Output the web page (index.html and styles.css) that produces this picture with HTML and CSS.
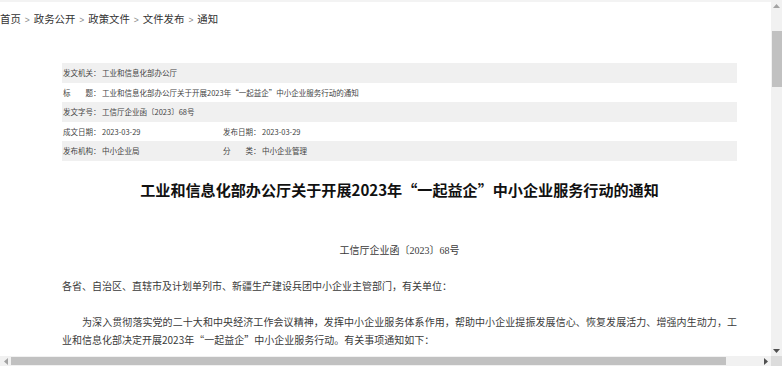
FILE: index.html
```html
<!DOCTYPE html>
<html lang="zh-CN">
<head>
  <meta charset="UTF-8">
  <title>工业和信息化部办公厅关于开展2023年“一起益企”中小企业服务行动的通知</title>
  <link rel="stylesheet" href="styles.css">
</head>
<body>

  <div class="window">
    <div class="viewport">

      <div class="crumbs">
        <a>首页</a><span class="sep">&gt;</span><a>政务公开</a><span class="sep">&gt;</span><a>政策文件</a><span class="sep">&gt;</span><a>文件发布</a><span class="sep">&gt;</span><a>通知</a>
      </div>

      <div class="article">
        <div class="meta">
          <div class="row odd">
            <div class="field"><span class="label">发文机关：</span><span>工业和信息化部办公厅</span></div>
          </div>
          <div class="row">
            <div class="field"><span class="label">标<span class="gap"></span>题：</span><span>工业和信息化部办公厅关于开展2023年“一起益企”中小企业服务行动的通知</span></div>
          </div>
          <div class="row odd">
            <div class="field"><span class="label">发文字号：</span><span>工信厅企业函〔2023〕68号</span></div>
          </div>
          <div class="row">
            <div class="field half"><span class="label">成文日期：</span><span>2023-03-29</span></div>
            <div class="field"><span class="label">发布日期：</span><span>2023-03-29</span></div>
          </div>
          <div class="row odd">
            <div class="field half"><span class="label">发布机构：</span><span>中小企业局</span></div>
            <div class="field"><span class="label">分<span class="gap"></span>类：</span><span>中小企业管理</span></div>
          </div>
        </div>

        <h1 class="title">工业和信息化部办公厅关于开展2023年“一起益企”中小企业服务行动的通知</h1>

        <p class="docno">工信厅企业函<span class="cjk">〔</span>2023<span class="cjk">〕</span>68号</p>

        <p class="text">各省、自治区、直辖市及计划单列市、新疆生产建设兵团中小企业主管部门，有关单位：</p>

        <p class="text indent">为深入贯彻落实党的二十大和中央经济工作会议精神，发挥中小企业服务体系作用，帮助中小企业提振发展信心、恢复发展活力、增强内生动力，工业和信息化部决定开展2023年“一起益企”中小企业服务行动。有关事项通知如下：</p>
      </div>

    </div>

    <div class="vbar">
      <div class="btn"><svg width="7" height="4" viewBox="0 0 7 4"><path d="M3.5 0L7 4H0z" fill="#a3a3a3"/></svg></div>
      <div class="vtrack"><div class="vthumb"></div></div>
      <div class="btn"><svg width="7" height="4" viewBox="0 0 7 4"><path d="M0 0H7L3.5 4z" fill="#505050"/></svg></div>
    </div>

    <div class="hbar">
      <div class="btn"><svg width="4" height="7" viewBox="0 0 4 7"><path d="M4 0V7L0 3.5z" fill="#a3a3a3"/></svg></div>
      <div class="htrack"><div class="hthumb"></div></div>
      <div class="btn"><svg width="4" height="7" viewBox="0 0 4 7"><path d="M0 0L4 3.5L0 7z" fill="#505050"/></svg></div>
    </div>

    <div class="corner"></div>
  </div>

</body>
</html>
```

FILE: styles.css
```css
html, body {
  margin: 0;
  height: 100%;
  background: #fff;
}

body {
  font-family: "Noto Sans CJK SC", sans-serif;
  color: #333;
}

.window {
  display: grid;
  grid-template-columns: 1fr 11px;
  grid-template-rows: 1fr 10px;
  height: 100vh;
}

.viewport {
  overflow: hidden;
  border-top: 2px solid #f3f3f3;
}

/* breadcrumb */
.crumbs {
  font-size: 10.4px;
  line-height: 20px;
  padding-top: 7px;
  color: #333;
  white-space: nowrap;
}

.crumbs .sep {
  color: #8a8a8a;
  font-family: "Liberation Sans", sans-serif;
  font-size: 8.5px;
  margin: 0 4px;
}

.article {
  width: 675px;
  margin-left: 62px;
}

/* info table */
.meta {
  margin-top: 33px;
  font-size: 7.5px;
  color: #444;
}

.row {
  display: flex;
  height: 19.5px;
  align-items: center;
  padding-left: 1px;
}

.row.odd {
  background: #f0f0f0;
}

.field {
  display: flex;
  white-space: nowrap;
}

.field.half {
  width: 160px;
}

.label {
  width: 39px;
  display: flex;
}

.gap {
  width: 15px;
}

.title {
  margin: 18.5px 0 0;
  font-size: 15.1px;
  line-height: 20px;
  font-weight: bold;
  color: #111;
  text-align: center;
  white-space: nowrap;
}

.docno {
  margin: 42px 0 0;
  font-family: "Liberation Serif", "Noto Sans CJK SC", serif;
  font-size: 10px;
  line-height: 18px;
  text-align: center;
  color: #3a3a3a;
}

.text {
  margin: 17px 0 0;
  font-size: 10px;
  line-height: 18px;
  color: #3a3a3a;
  text-align: justify;
}

.text.indent {
  margin-top: 18px;
  text-indent: 20px;
}

.cjk {
  font-family: "Noto Sans CJK SC", sans-serif;
}

/* scrollbars */
.vbar {
  display: flex;
  flex-direction: column;
  background: #f1f1f1;
}

.hbar {
  display: flex;
  background: #f1f1f1;
}

.btn {
  display: flex;
  align-items: center;
  justify-content: center;
  flex: 0 0 11px;
}

.vtrack {
  flex: 1;
  padding: 20px 0 0 1px;
}

.vthumb {
  height: 56px;
  background: #c1c1c1;
}

.htrack {
  flex: 1;
  padding: 1px 34px 1px 0;
}

.hthumb {
  height: 100%;
  background: #c1c1c1;
}

.corner {
  background: #dcdcdc;
}
```
